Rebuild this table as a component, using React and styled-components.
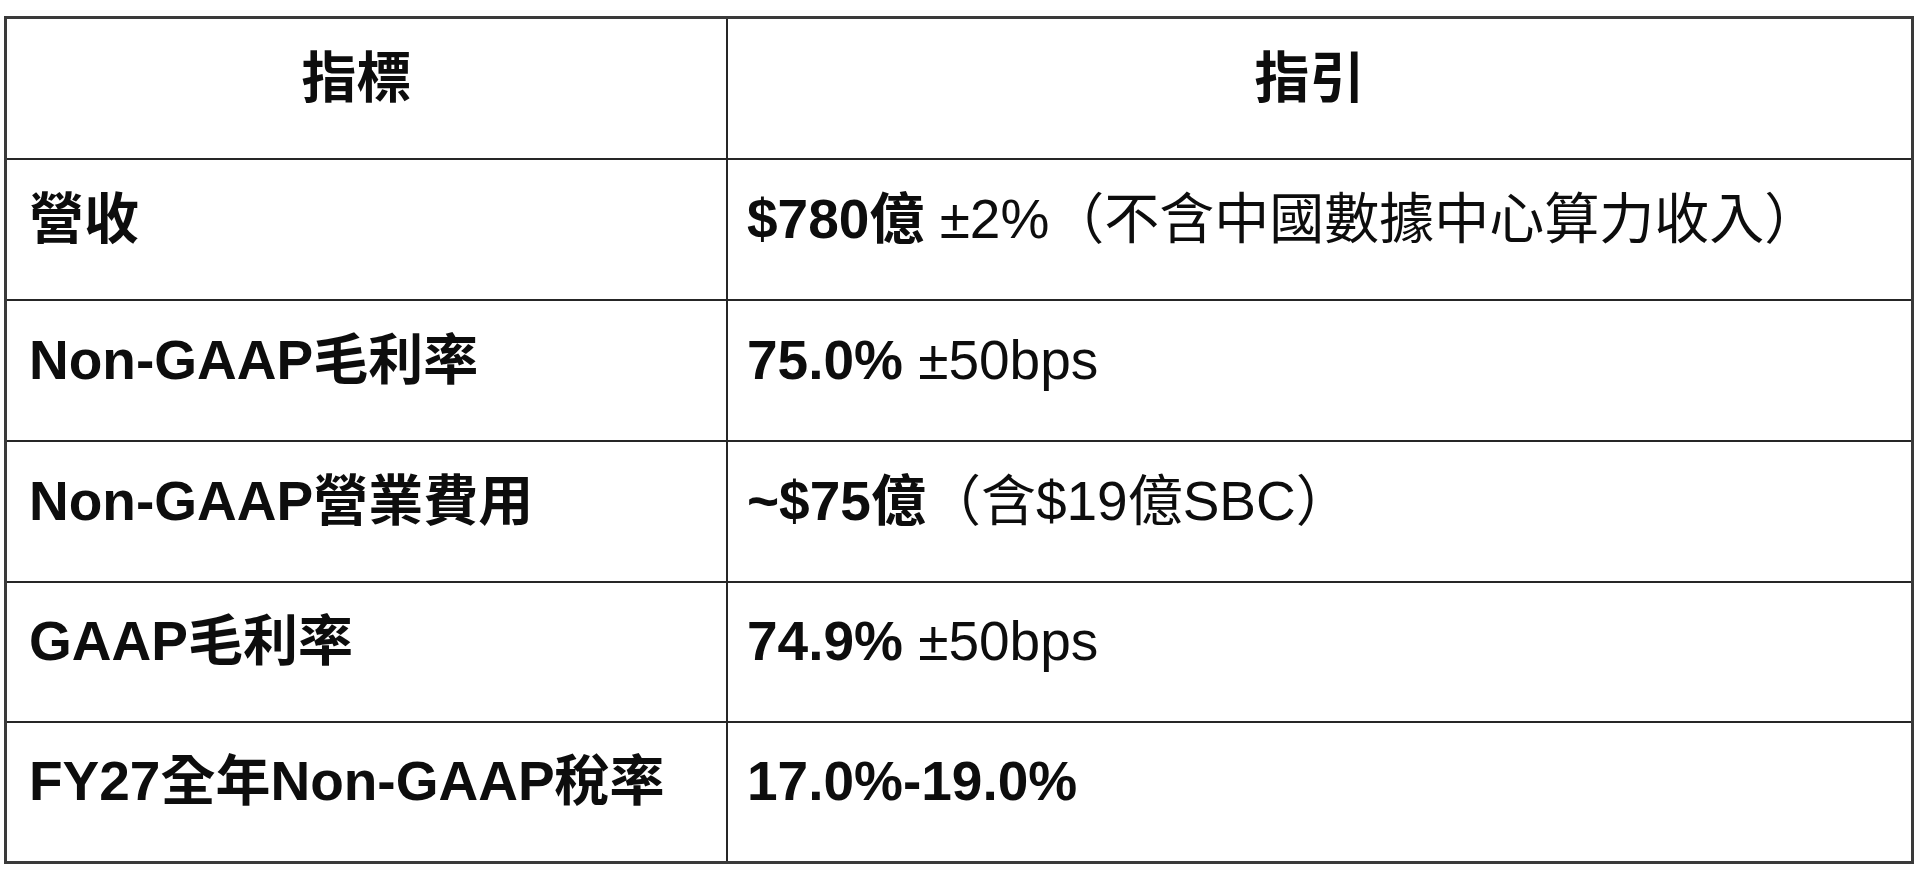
import React from "react";
import styled, { createGlobalStyle } from "styled-components";

const Global = createGlobalStyle`
  html, body { margin: 0; padding: 0; background: #ffffff; }
  body { font-family: "Liberation Sans", "Noto Sans CJK TC", sans-serif; }
`;

const Page = styled.div`
  padding: 16px 6px 10px 4px;
  background: #ffffff;
`;

const Table = styled.div`
  box-sizing: border-box;
  width: 1910px;
  display: grid;
  grid-template-columns: 721px 1fr;
  grid-template-rows: 141px 141px 141px 141px 140px 138px;
  border: 3px solid #3a3a3a;
`;

const Cell = styled.div`
  box-sizing: border-box;
  display: flex;
  align-items: center;
  justify-content: ${(p) => (p.$head ? "center" : "flex-start")};
  padding: 0 20px 22px ${(p) => (p.$head ? "0" : p.$first ? "22px" : "19px")};
  border-right: ${(p) => (p.$first ? "2px solid #262626" : "none")};
  border-bottom: ${(p) => (p.$last ? "none" : "2px solid #262626")};
  font-family: "Liberation Sans", "Noto Sans CJK TC", sans-serif;
  font-size: 55px;
  line-height: 64px;
  color: #0d0d0d;
  white-space: pre;
`;

const Text = styled.span`
  display: inline;
`;

const Strong = styled.span`
  font-weight: 700;
`;

const Plain = styled.span`
  font-weight: 400;
`;

const rows = [
  { k: "營收", b: "$780億", r: " ±2%（不含中國數據中心算力收入）" },
  { k: "Non-GAAP毛利率", b: "75.0%", r: " ±50bps" },
  { k: "Non-GAAP營業費用", b: "~$75億", r: "（含$19億SBC）" },
  { k: "GAAP毛利率", b: "74.9%", r: " ±50bps" },
  { k: "FY27全年Non-GAAP稅率", b: "17.0%-19.0%", r: "" },
];

export default function App() {
  return (
    <>
      <Global />
      <Page>
        <Table>
          <Cell $head $first>
            <Strong>指標</Strong>
          </Cell>
          <Cell $head>
            <Strong>指引</Strong>
          </Cell>
          {rows.map((row, i) => {
            const last = i === rows.length - 1;
            return (
              <React.Fragment key={row.k}>
                <Cell $first $last={last}>
                  <Strong>{row.k}</Strong>
                </Cell>
                <Cell $last={last}>
                  <Text>
                    <Strong>{row.b}</Strong>
                    {row.r && <Plain>{row.r}</Plain>}
                  </Text>
                </Cell>
              </React.Fragment>
            );
          })}
        </Table>
      </Page>
    </>
  );
}
